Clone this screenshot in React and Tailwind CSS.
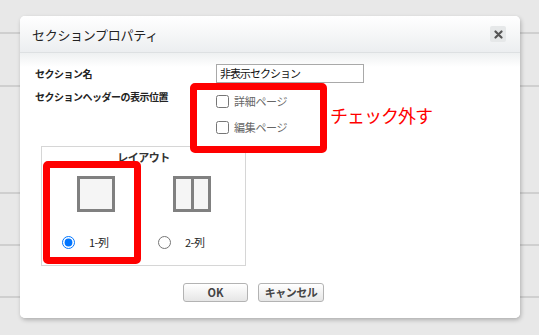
import React from 'react';

const bgRows = ['h-[34px]', 'h-[53px]', 'h-[107px]', 'h-[52px]', 'h-[52px]'];

function LayoutIcon({ split }) {
  return (
    <div className="w-[38px] h-[36px] border-[3px] border-[#808080] bg-[#f5f5f5] flex">
      {split && (
        <>
          <div className="flex-1" />
          <div className="w-[3px] bg-[#808080]" />
          <div className="flex-1" />
        </>
      )}
    </div>
  );
}

function LayoutOption({ split, label, checked }) {
  return (
    <div className="w-[96px] flex flex-col">
      <div className="flex justify-center">
        <LayoutIcon split={split} />
      </div>
      <label className="flex items-center mt-[23px] pl-[14px] h-[14px]">
        <input
          type="radio"
          name="layout"
          defaultChecked={checked}
          className="m-0 w-[13px] h-[13px] accent-[#0075ff]"
        />
        <span className="ml-[14px] text-[11px] leading-none text-[#222] tracking-[-0.5px]">{label}</span>
      </label>
    </div>
  );
}

function Checkbox({ label }) {
  return (
    <label className="flex items-center h-[14px]">
      <input type="checkbox" className="m-0 w-[13px] h-[13px]" />
      <span className="ml-[5px] text-[11px] leading-none text-[#666] tracking-[-0.3px]">{label}</span>
    </label>
  );
}

export default function App() {
  return (
    <div className="relative w-[539px] h-[335px] overflow-hidden bg-[#e8e8e8] font-['Noto_Sans_CJK_JP',sans-serif]">
      {/* 背景の罫線 */}
      <div className="flex flex-col">
        {bgRows.map((h, i) => (
          <div key={i} className={`${h} border-b-2 border-[#cfcfcf]`} />
        ))}
      </div>

      {/* ダイアログ */}
      <div className="absolute left-[20px] top-[16px] w-[500px] h-[302px] bg-white rounded-[5px] shadow-[1px_2px_4px_rgba(0,0,0,0.25)] overflow-hidden flex flex-col">
        <div className="h-[37px] shrink-0 flex items-center justify-between pl-[12px] pr-[14px] bg-gradient-to-b from-white to-[#eceef0] border-b border-[#dde0e2]">
          <span className="text-[13px] text-[#222] tracking-[-0.3px] leading-none">セクションプロパティ</span>
          <button className="w-[16px] h-[16px] bg-[#e6e8e9] rounded-[2px] flex items-center justify-center">
            <svg width="9" height="9" viewBox="0 0 9 9">
              <path d="M1.5 1.5 L7.5 7.5 M7.5 1.5 L1.5 7.5" stroke="#555" strokeWidth="2.2" strokeLinecap="round" />
            </svg>
          </button>
        </div>

        <div className="flex-1 flex flex-col pt-[11px] pl-[15px] bg-[linear-gradient(to_bottom,#eef0f1,#ffffff_14px)]">
          <div className="flex items-center h-[19px]">
            <div className="w-[181px] text-[10px] font-bold text-[#222] tracking-[-0.5px] leading-none">セクション名</div>
            <div className="w-[148px] h-[19px] border border-[#a9a9a9] bg-white flex items-center px-[3px]">
              <span className="text-[11px] text-[#111] tracking-[-1px] leading-none">非表示セクション</span>
            </div>
          </div>

          <div className="flex mt-[7px]">
            <div className="w-[181px] text-[10px] font-bold text-[#222] tracking-[-0.5px] leading-[14px]">
              セクションヘッダーの表示位置
            </div>
            <div className="flex flex-col gap-[12px] pt-[4px]">
              <Checkbox label="詳細ページ" />
              <Checkbox label="編集ページ" />
            </div>
          </div>

          <div className="mt-[12px] ml-[6px] w-[205px] h-[120px] border border-[#d6d6d6] flex flex-col">
            <div className="text-center text-[11px] font-bold text-[#333] leading-[14px] mt-[3px] tracking-[-0.5px]">
              レイアウト
            </div>
            <div className="flex pl-[6px] mt-[12px]">
              <LayoutOption label="1-列" checked />
              <LayoutOption split label="2-列" />
            </div>
          </div>

          <div className="flex gap-[10px] pl-[148px] mt-[17px]">
            <button className="w-[65px] h-[19px] border border-[#b3b3b3] rounded-[3px] bg-gradient-to-b from-white to-[#e6e6e6] text-[11px] font-bold text-[#444] leading-none">
              OK
            </button>
            <button className="w-[66px] h-[19px] border border-[#b3b3b3] rounded-[3px] bg-gradient-to-b from-white to-[#e6e6e6] text-[11px] font-bold text-[#444] leading-none tracking-[-0.5px]">
              キャンセル
            </button>
          </div>
        </div>

        {/* 注釈 */}
        <div className="absolute left-[170px] top-[67px] w-[137px] h-[70px] border-[7px] border-[#ff0000] rounded-[5px]" />
        <div className="absolute left-[310px] top-[90px] text-[18px] leading-none text-[#ff0000] tracking-[-1px]">チェック外す</div>
        <div className="absolute left-[23px] top-[145px] w-[98px] h-[103px] border-[7px] border-[#ff0000] rounded-[5px]" />
      </div>
    </div>
  );
}
